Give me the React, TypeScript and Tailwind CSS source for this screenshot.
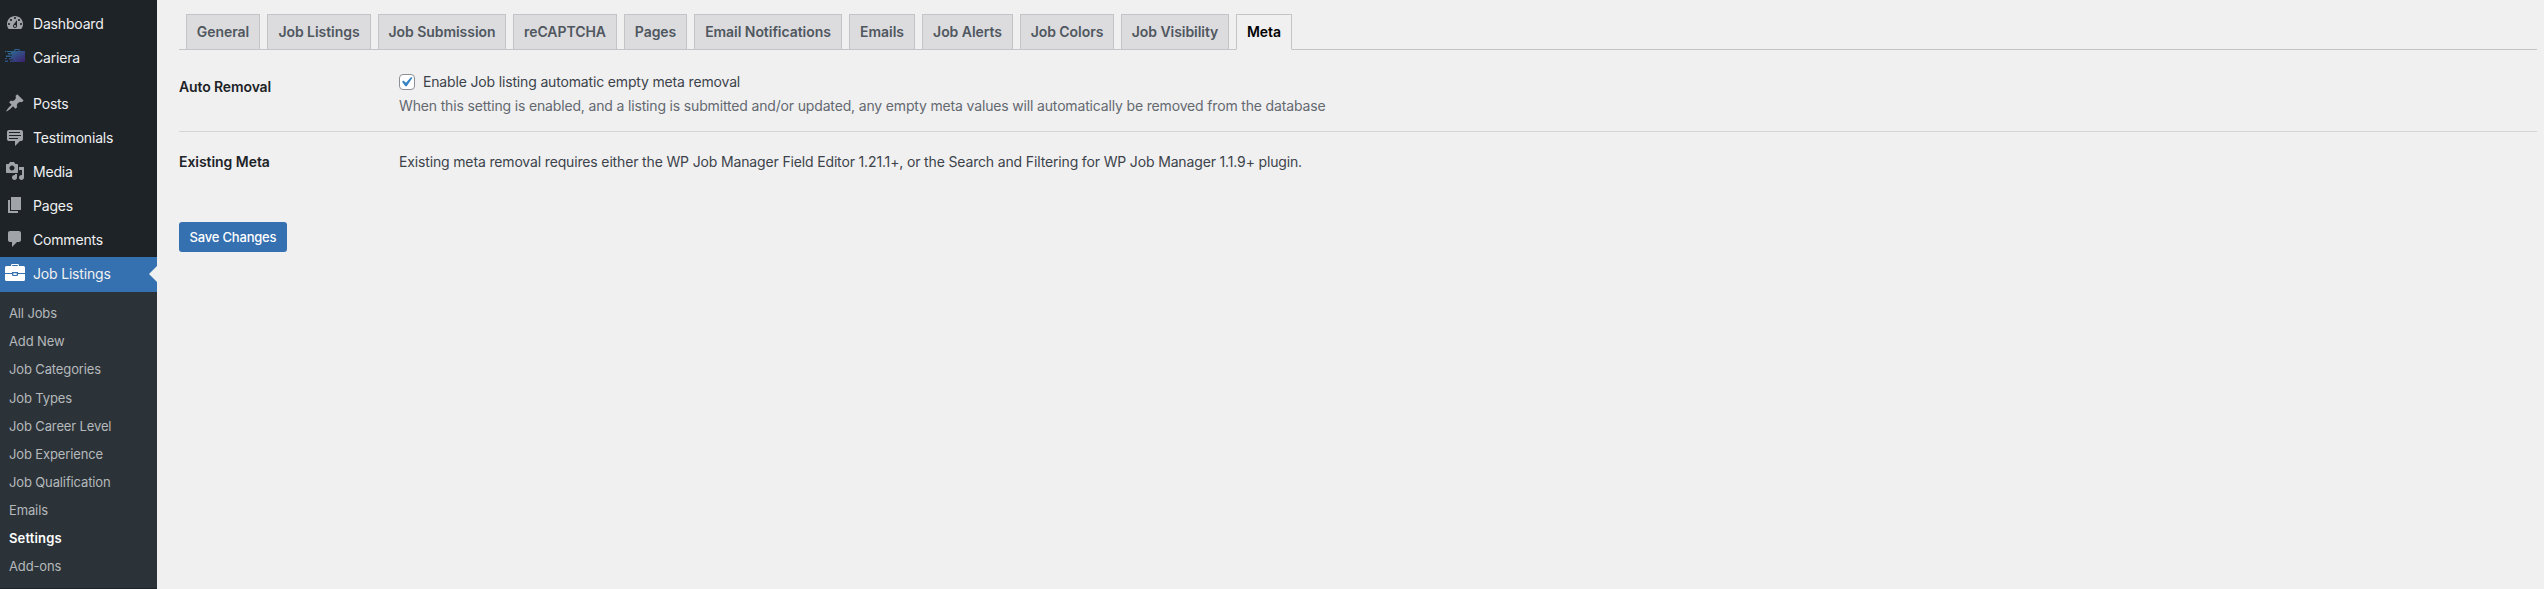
import React from "react";

const ICONS: Record<string, string> = {
  dashboard:
    "M3.76 16h12.48c1.1-1.37 1.76-3.11 1.76-5 0-4.42-3.58-8-8-8s-8 3.58-8 8c0 1.89.66 3.63 1.76 5zM10 4c.55 0 1 .45 1 1s-.45 1-1 1-1-.45-1-1 .45-1 1-1zM6 6c.55 0 1 .45 1 1s-.45 1-1 1-1-.45-1-1 .45-1 1-1zm8 0c.55 0 1 .45 1 1s-.45 1-1 1-1-.45-1-1 .45-1 1-1zm-5.37 5.55L12 7v6c0 1.1-.9 2-2 2s-2-.9-2-2c0-.57.24-1.08.63-1.45zM4 10c.55 0 1 .45 1 1s-.45 1-1 1-1-.45-1-1 .45-1 1-1zm12 0c.55 0 1 .45 1 1s-.45 1-1 1-1-.45-1-1 .45-1 1-1zm-5 3c0-.55-.45-1-1-1s-1 .45-1 1 .45 1 1 1 1-.45 1-1z",
  pin: "M10.44 3.02l1.82-1.82 6.36 6.35-1.83 1.82c-1.05-.68-2.48-.57-3.41.36l-.75.75c-.92.93-1.04 2.35-.35 3.41l-1.83 1.82-2.41-2.41-2.8 2.79c-.42.42-3.38 2.71-3.8 2.29s1.86-3.39 2.28-3.81l2.79-2.79L4.1 9.36l1.83-1.82c1.05.69 2.48.57 3.4-.36l.75-.75c.93-.92 1.05-2.35.36-3.41z",
  testimonial:
    "M4 3h12c.55 0 1.02.2 1.41.59S18 4.45 18 5v7c0 .55-.2 1.02-.59 1.41S16.55 14 16 14h-1l-5 5v-5H4c-.55 0-1.02-.2-1.41-.59S2 12.55 2 12V5c0-.55.2-1.02.59-1.41S3.45 3 4 3zm11 2H4v1h11V5zm1 3H4v1h12V8zm-3 3H4v1h9v-1z",
  media:
    "M13 11V4c0-.55-.45-1-1-1h-1.67L9 1H5L3.67 3H2c-.55 0-1 .45-1 1v7c0 .55.45 1 1 1h10c.55 0 1-.45 1-1zM7 4.5c1.38 0 2.5 1.12 2.5 2.5S8.38 9.5 7 9.5 4.5 8.38 4.5 7 5.62 4.5 7 4.5zM14 6h5v10.5c0 1.38-1.12 2.5-2.5 2.5S14 17.88 14 16.5s1.12-2.5 2.5-2.5c.17 0 .34.02.5.05V9h-3V6zm-4 8.05V13h2v3.5c0 1.38-1.12 2.5-2.5 2.5S7 17.88 7 16.5 8.12 14 9.5 14c.17 0 .34.02.5.05z",
  page: "M6 15V2h10v13H6zm-1 1h8v2H3V5h2v11z",
  comment: "M5 2h9c1.1 0 2 .9 2 2v7c0 1.1-.9 2-2 2h-2l-5 5v-5H5c-1.1 0-2-.9-2-2V4c0-1.1.9-2 2-2z",
};

function Glyph({ name }: { name: string }) {
  if (name === "cariera")
    return (
      <svg viewBox="0 0 20 14" className="mb-[3px] h-[14px] w-5">
        <defs>
          <linearGradient id="cg" x1="0" y1="0" x2="1" y2="1">
            <stop offset="0.2" stopColor="#2d6c94" />
            <stop offset="1" stopColor="#3c1f6e" />
          </linearGradient>
        </defs>
        <path
          fill="url(#cg)"
          d="M9 2V1l1-1h4l1 1v1h5v11H5v-1.500h3v-1H4V9h2V8H1V6.500h6v-1H3V4h3V3H2V2zM10.300 2h3.400V1h-3.400zM0 2h1.200v1.200H0zM0 11.500h3V13H0zM0 9h2v1H0z"
        />
      </svg>
    );
  if (name === "briefcase")
    return (
      <svg viewBox="0 0 20 17" className="mb-[2px] h-[17px] w-5" fill="#fff" fillRule="evenodd">
        <path d="M6 2V1.200Q6 0 7.200 0h5.600Q14 0 14 1.200V2h4.500Q20 2 20 3.500V9h-7V8H7v1H0V3.500Q0 2 1.500 2zM7.200 2h5.600V1.100H7.200z" />
        <path d="M0 10h7v.800q0 1.200 1.200 1.200h3.600q1.200 0 1.200-1.200V10h7v5.500q0 1.500-1.500 1.500h-17Q0 17 0 15.500zM8.300 9.300h3.400V11H8.300z" />
      </svg>
    );
  return (
    <svg viewBox="0 0 20 20" className="h-5 w-5" fill="#a0a4a9">
      <path d={ICONS[name]} />
    </svg>
  );
}

const MENU = [
  { label: "Dashboard", icon: "dashboard" },
  { label: "Cariera", icon: "cariera" },
  { label: "Posts", icon: "pin", gap: true },
  { label: "Testimonials", icon: "testimonial" },
  { label: "Media", icon: "media" },
  { label: "Pages", icon: "page" },
  { label: "Comments", icon: "comment" },
  { label: "Job Listings", icon: "briefcase", active: true },
];

const SUBMENU = [
  "All Jobs",
  "Add New",
  "Job Categories",
  "Job Types",
  "Job Career Level",
  "Job Experience",
  "Job Qualification",
  "Emails",
  "Settings",
  "Add-ons",
];

const TABS = [
  { label: "General", w: "w-[74px]" },
  { label: "Job Listings", w: "w-[104px]" },
  { label: "Job Submission", w: "w-[128px]" },
  { label: "reCAPTCHA", w: "w-[104px]" },
  { label: "Pages", w: "w-[63px]" },
  { label: "Email Notifications", w: "w-[148px]" },
  { label: "Emails", w: "w-[66px]" },
  { label: "Job Alerts", w: "w-[91px]" },
  { label: "Job Colors", w: "w-[94px]" },
  { label: "Job Visibility", w: "w-[108px]" },
  { label: "Meta", w: "w-[56px]" },
];

function Sidebar() {
  return (
    <aside className="flex w-[157px] shrink-0 flex-col bg-[#1d2327] pt-[6px]">
      {MENU.map((m) => (
        <a
          key={m.label}
          className={
            "relative flex shrink-0 items-center text-[14px] tracking-[-0.18px] text-[#f0f0f1] " +
            (m.gap ? "mt-[12px] " : "") +
            (m.active ? "mt-[1px] h-[35px] bg-[#3570b0] pb-[2px]" : "h-[34px]")
          }
        >
          <span className="flex w-[33px] justify-start pl-[5px]">
            <Glyph name={m.icon} />
          </span>
          {m.label}
          {m.active && (
            <span className="absolute top-[9px] right-0 h-0 w-0 border-y-8 border-r-8 border-y-transparent border-r-[#f0f0f1]" />
          )}
        </a>
      ))}
      <ul className="flex h-[296px] shrink-0 flex-col bg-[#2c3338] pt-[8px] text-[13px] tracking-[-0.13px] text-[#b5b9bc]">
        {SUBMENU.map((s) => (
          <li
            key={s}
            className={
              "flex h-[28.100px] items-center pl-[9px] " +
              (s === "Settings" ? "font-semibold tracking-[0.15px] text-white" : "")
            }
          >
            {s}
          </li>
        ))}
      </ul>
    </aside>
  );
}

export default function App() {
  return (
    <div className="flex h-[589px] w-[2544px] overflow-hidden bg-[#f0f0f1] font-['Inter',sans-serif] whitespace-nowrap">
      <Sidebar />
      <main className="flex flex-col pt-[14px] pl-[22px] text-[14px] text-[#3c434a]">
        <nav className="flex h-[36px] w-[2358px] gap-[7px] border-b border-[#c3c4c7] pl-[7px]">
          {TABS.map((t) => (
            <a
              key={t.label}
              className={
                "flex justify-center border border-[#c3c4c7] pt-[6px] text-[14px] leading-[22px] font-semibold tracking-[-0.05px] " +
                (t.label === "Meta"
                  ? "h-[36px] border-b-[#f0f0f1] bg-[#f0f0f1] text-black "
                  : "h-[36px] bg-[#dcdcde] text-[#50575e] ") +
                t.w
              }
            >
              {t.label}
            </a>
          ))}
        </nav>
        <section className="flex h-[82px] w-[2358px] border-b border-[#d5d5d7]">
          <h2 className="w-[220px] pt-[27px] leading-5 font-semibold tracking-[-0.12px] text-[#1d2327]">Auto Removal</h2>
          <div className="pt-[22px] tracking-[-0.16px]">
            <label className="flex h-5 items-center gap-2">
              <span className="flex h-4 w-4 items-center justify-center rounded-[4px] border border-[#8c8f94] bg-white">
                <svg viewBox="0.7 0 20 20" className="h-[20px] w-[20px] shrink-0" fill="#3582c4">
                  <path d="M14.830 4.890l1.340.940-5.810 8.380H9.020L5.780 9.670l1.340-1.250 2.570 2.400z" />
                </svg>
              </span>
              <span className="pb-[2px]">Enable Job listing automatic empty meta removal</span>
            </label>
            <p className="mt-1 leading-5 text-[#646970]">
              When this setting is enabled, and a listing is submitted and/or updated, any empty meta values will
              automatically be removed from the database
            </p>
          </div>
        </section>
        <section className="flex h-[90px]">
          <h2 className="w-[220px] pt-[20px] leading-5 font-semibold tracking-[-0.05px] text-[#1d2327]">Existing Meta</h2>
          <p className="pt-[20px] leading-5 tracking-[-0.15px]">
            Existing meta removal requires either the WP Job Manager Field Editor 1.21.1+, or the Search and Filtering
            for WP Job Manager 1.1.9+ plugin.
          </p>
        </section>
        <button className="h-[30px] w-[108px] rounded-[3px] bg-[#3570b0] pt-px text-[13px] font-medium tracking-[-0.2px] text-white">
          Save Changes
        </button>
      </main>
    </div>
  );
}
